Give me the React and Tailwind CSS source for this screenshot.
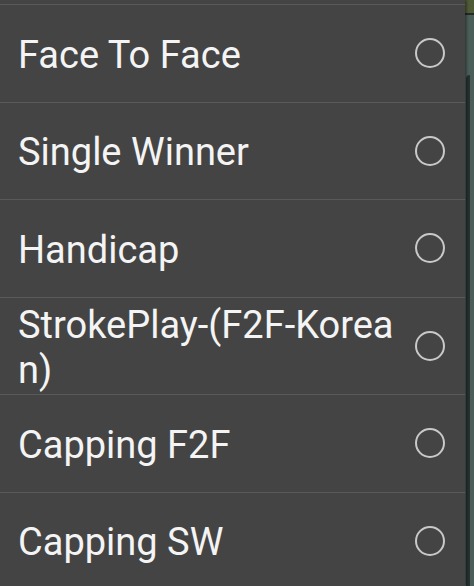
const options = [
  'Face To Face',
  'Single Winner',
  'Handicap',
  'StrokePlay-(F2F-Korean)',
  'Capping F2F',
  'Capping SW',
];

function Radio() {
  return (
    <span className="shrink-0 w-[30px] h-[30px] rounded-full border-[2.5px] border-[#c9c9c9]" />
  );
}

export default function App() {
  return (
    <div className="w-[474px] h-[586px] overflow-hidden flex bg-[#3f4e4a]" style={{ fontFamily: 'Roboto, "Noto Sans", sans-serif' }}>
      <div className="w-[465px] h-full bg-[#444444] shadow-[2px_0_2px_rgba(0,0,0,0.35)] z-10">
        <div className="h-[4px]" />
        {options.map((label) => (
          <div
            key={label}
            className="h-[97.5px] border-t border-[#5a5a5a] flex items-center pl-[18px] pr-[20px] gap-[14px]"
          >
            <span className="flex-1 min-w-0 pt-[4px] text-[38px] leading-[45px] text-[#f4f4f4] break-all">
              {label}
            </span>
            <Radio />
          </div>
        ))}
      </div>
      <div className="w-[9px] h-full flex flex-col">
        <div className="h-[13px] bg-[#4f5b36]" />
        <div className="h-[2px] bg-[#262a26]" />
        <div className="flex-1 bg-[#4c5e5a] pt-[60px]">
          <div className="h-full ml-[1px] w-[4px] bg-[#263030] rounded-tl-[6px]" />
        </div>
      </div>
    </div>
  );
}
